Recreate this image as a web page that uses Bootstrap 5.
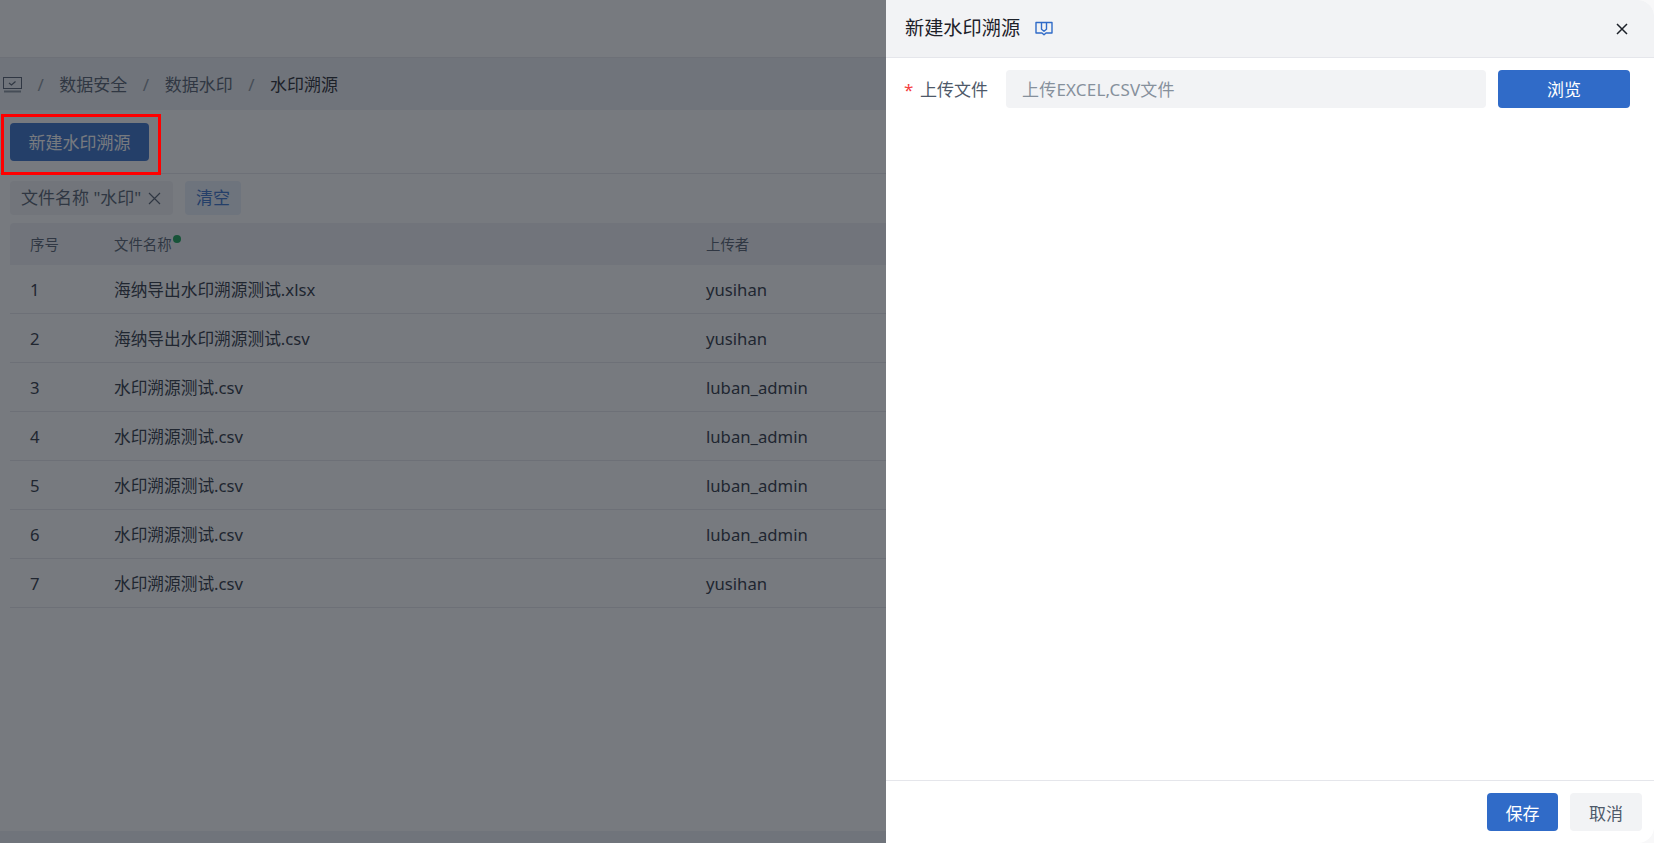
<!DOCTYPE html>
<html lang="zh">
<head>
<meta charset="utf-8">
<title>新建水印溯源</title>
<link rel="stylesheet" href="https://cdn.jsdelivr.net/npm/bootstrap@5.3.0/dist/css/bootstrap.min.css">
<style>
html,body{height:100%;margin:0;overflow:hidden}
body{font-family:"Noto Sans","Noto Sans CJK SC",sans-serif;font-size:17px;color:#272e3b;background:#fff}
.page-shell{height:843px;display:flex;flex-direction:column;position:relative;overflow:hidden}
.top-strip{height:58px;flex:none;border-bottom:1px solid #e5e6eb}
.crumbs{height:52px;flex:none;background:#eef0f4;padding:2px 0 0 3px;gap:15.5px;color:#4e5969}
.crumbs .sep{color:#86909c}
.crumbs .now{color:#1d2129}
.tool-row{height:64px;flex:none;padding:13px 10px 0;border-bottom:1px solid #e5e6eb}
.btn-new{width:139px;height:38px;padding:2px 0 0;border:0;border-radius:4px;background:#306bc8;color:#fff;font-size:17px;line-height:34px}
.mark-box{position:absolute;left:1px;top:114px;width:160px;height:61px;border:3px solid #f00}
.filter-row{height:49px;flex:none;padding:7px 10px 0;gap:12px}
.filter-tag{height:34px;padding:0 11px 0 11px;border-radius:4px;background:#f2f3f5;color:#4e5969;font-size:17px;gap:7px;width:163px}
.filter-clear{height:34px;width:56px;justify-content:center;border-radius:4px;background:#e8f0fa;color:#306bc8;font-size:17px}
.data-wrap{padding:0 10px;flex:none}
.grid-head,.grid-line{display:grid;grid-template-columns:104px 592px 1fr}
.grid-head{height:42px;background:#f0f1f5;color:#4e5969;font-size:14.4px;align-items:center;border-radius:4px 4px 0 0;padding-top:1px}
.grid-line{height:49px;align-items:center;border-bottom:1px solid #e5e6eb;font-size:16.7px;color:#272e3b;padding-top:1px}
.grid-head>div:first-child,.grid-line>div:first-child{padding-left:20px}
.has-dot{position:relative;display:inline-block}
.has-dot::after{content:"";position:absolute;right:-9px;top:1px;width:8px;height:8px;border-radius:50%;background:#0f9f4f}
.foot-band{margin-top:auto;height:12px;flex:none;background:#eef0f4}
.scrim{position:absolute;inset:0;background:rgba(29,33,41,.6)}
.drawer{position:absolute;top:0;right:0;bottom:0;width:768px;background:#f8f8f9}
.drawer-panel{height:100%;background:#fff;display:flex;flex-direction:column;border-radius:0 16px 16px 0;overflow:hidden}
.drawer-head{height:58px;flex:none;background:#f2f3f5;border-bottom:1px solid #e5e6eb;padding:0 25px 0 19px}
.drawer-title{font-size:19.2px;color:#1d2129}
.book-ico{margin-left:15px}
.drawer-form{padding:12px 0 0 18px;flex:1}
.star{color:#f53f3f;width:16px}
.form-lbl{width:86px;color:#4e5969}
.form-lbl-wrap{height:38px;padding-top:2px}
.file-input{width:480px;height:38px;background:#f2f3f5;border-radius:4px;color:#86909c;padding:2px 16px 0;font-size:17px;letter-spacing:.2px}
.btn-browse{width:132px;height:38px;padding:2px 0 0;border:0;border-radius:4px;background:#306bc8;color:#fff;font-size:17px;margin-left:12px}
.drawer-foot{height:63px;flex:none;border-top:1px solid #e5e6eb;padding:0 12px 0 0;gap:12px}
.btn-save{width:71px;height:38px;padding:3px 0 0;border:0;border-radius:4px;background:#306bc8;color:#fff;font-size:17px}
.btn-quit{width:72px;height:38px;padding:3px 0 0;border:0;border-radius:4px;background:#f2f3f5;color:#4e5969;font-size:17px}
.close-x{width:14px;height:14px;padding:0;border:0;background:none;display:flex}
</style>
</head>
<body>
<div class="page-shell">
  <div class="top-strip"></div>
  <div class="crumbs d-flex align-items-center">
    <svg width="19" height="16" viewBox="0 0 19 16" fill="none" stroke="#4e5969" stroke-width="1"><rect x=".5" y=".5" width="18" height="11"/><path d="M6 6l2.500 2 4-3.500" stroke-width="1.200"/><path d="M1 14.500h17" stroke-width="2" stroke="#86909c"/></svg>
    <span class="sep">/</span><span>数据安全</span><span class="sep">/</span><span>数据水印</span><span class="sep">/</span><span class="now">水印溯源</span>
  </div>
  <div class="tool-row"><button class="btn btn-new" type="button">新建水印溯源</button></div>
  <div class="filter-row d-flex">
    <div class="filter-tag d-flex align-items-center"><span>文件名称 "水印"</span><svg width="13" height="13" viewBox="0 0 13 13" stroke="#4e5969" stroke-width="1.200"><path d="M1 1l11 11M12 1L1 12"/></svg></div>
    <div class="filter-clear d-flex align-items-center">清空</div>
  </div>
  <div class="data-wrap">
    <div class="grid-head"><div>序号</div><div><span class="has-dot">文件名称</span></div><div>上传者</div></div>
    <div class="grid-line"><div>1</div><div>海纳导出水印溯源测试.xlsx</div><div>yusihan</div></div>
    <div class="grid-line"><div>2</div><div>海纳导出水印溯源测试.csv</div><div>yusihan</div></div>
    <div class="grid-line"><div>3</div><div>水印溯源测试.csv</div><div>luban_admin</div></div>
    <div class="grid-line"><div>4</div><div>水印溯源测试.csv</div><div>luban_admin</div></div>
    <div class="grid-line"><div>5</div><div>水印溯源测试.csv</div><div>luban_admin</div></div>
    <div class="grid-line"><div>6</div><div>水印溯源测试.csv</div><div>luban_admin</div></div>
    <div class="grid-line"><div>7</div><div>水印溯源测试.csv</div><div>yusihan</div></div>
  </div>
  <div class="foot-band"></div>
  <div class="scrim"></div>
  <div class="mark-box"></div>
  <aside class="drawer">
    <div class="drawer-panel">
      <div class="drawer-head d-flex align-items-center">
        <span class="drawer-title">新建水印溯源</span>
        <svg class="book-ico" width="18" height="15" viewBox="0 0 18 15" fill="none" stroke="#306bc8" stroke-width="1.400" stroke-linejoin="round"><path d="M1 1.500h16v10.500h-6l-2 1.800-2-1.800H1z"/><path d="M6.500 1.500v6.700l2.500 2 2.500-2V1.500"/></svg>
        <button class="close-x ms-auto" type="button" aria-label="关闭"><svg width="14" height="14" viewBox="0 0 14 14" stroke="#1d2129" stroke-width="1.500"><path d="M2 2l10 10M12 2L2 12"/></svg></button>
      </div>
      <div class="drawer-form d-flex align-items-start">
        <div class="form-lbl-wrap d-flex align-items-center"><span class="star">*</span><span class="form-lbl">上传文件</span></div>
        <div class="file-input d-flex align-items-center">上传EXCEL,CSV文件</div>
        <button class="btn btn-browse" type="button">浏览</button>
      </div>
      <div class="drawer-foot d-flex align-items-center justify-content-end">
        <button class="btn btn-save" type="button">保存</button>
        <button class="btn btn-quit" type="button">取消</button>
      </div>
    </div>
  </aside>
</div>
<script src="https://cdn.jsdelivr.net/npm/bootstrap@5.3.0/dist/js/bootstrap.bundle.min.js"></script>
</body>
</html>
